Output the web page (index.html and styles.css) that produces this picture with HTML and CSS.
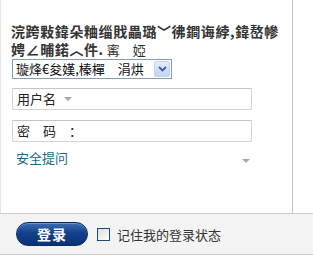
FILE: index.html
```html
<html>
	<head>
		<title>login</title>
		<link rel="stylesheet" href="styles.css">
	</head>
	<body>
		<div class="panel">
			<div class="title">
				<div class="line">浣跨敤鍏朵粬缁戝畾璐﹀彿鐧诲綍,鍏嶅幓</div>
				<div class="line">娉∠晡鍩︿件.<span class="thin"> 寗　婭</span></div>
			</div>
			<div class="select">
				<span class="select_text">璇烽€夋嫨,榛樿　涓烘</span>
				<span class="select_btn">
					<svg width="9" height="6" viewBox="0 0 9 6"><path d="M1 1 L4.5 4.5 L8 1" fill="none" stroke="#3a5ea8" stroke-width="1.8"/></svg>
				</span>
			</div>
			<div class="field field_user">用户名<span class="tri"></span></div>
			<div class="field">密　码　：</div>
			<div class="question">
				<a class="link">安全提问</a>
				<span class="tri"></span>
			</div>
		</div>
		<div class="footer">
			<div class="btn">登录</div>
			<label class="remember"><span class="check"></span>记住我的登录状态</label>
		</div>
	</body>
</html>
```
FILE: styles.css
```css
body {
  margin: 0;
  background-color: #fff;
  font-family: "Noto Sans CJK SC", "Liberation Sans", sans-serif;
  color: #222;
}

div.panel {
  width: 280px;
  height: 191px;
  padding: 22px 0 0 11px;
  border-right: 1px solid #c4c4c4;
  border-left: 1px solid #e4e4e4;
  display: flex;
  flex-direction: column;
}

div.title {
  font-size: 14px;
  font-weight: bold;
  line-height: 18px;
  color: #333;
  margin-left: -1px;
}

div.line {
  white-space: nowrap;
  letter-spacing: 0.6px;
}

span.thin {
  font-weight: normal;
  font-size: 13px;
  letter-spacing: 0;
}

div.select {
  width: 158px;
  height: 18px;
  border: 1px solid #7f9db9;
  display: flex;
  align-items: center;
  font-size: 13px;
  line-height: 18px;
}

span.select_text {
  flex: 1;
  padding-left: 3px;
  white-space: nowrap;
  color: #111;
}

span.select_btn {
  width: 16px;
  height: 16px;
  margin-right: 1px;
  border: 1px solid #c3d3f3;
  border-radius: 2px;
  background: linear-gradient(#e6edfc, #c1d3f7);
  display: flex;
  align-items: center;
  justify-content: center;
  box-sizing: border-box;
}

div.field {
  width: 234px;
  height: 20px;
  margin-top: 10px;
  border: 1px solid #d2d2d2;
  border-top-color: #c4c4c4;
  padding-left: 4px;
  font-size: 13px;
  line-height: 20px;
  color: #222;
  display: flex;
  align-items: center;
  box-sizing: content-box;
}

div.field_user {
  margin-top: 9px;
}

span.tri {
  width: 0;
  height: 0;
  margin-left: 8px;
  border-left: 4px solid transparent;
  border-right: 4px solid transparent;
  border-top: 4px solid #a8a8a8;
}

div.question {
  width: 234px;
  margin-top: 7px;
  padding-left: 4px;
  display: flex;
  align-items: center;
  justify-content: space-between;
}

a.link {
  font-size: 13px;
  line-height: 18px;
  color: #1b6886;
}

div.question span.tri {
  margin-top: 6px;
}

div.footer {
  height: 40px;
  border-top: 1px solid #cccccc;
  border-bottom: 1px solid #cccccc;
  background-color: #f3f3f3;
  padding-left: 16px;
  display: flex;
  align-items: center;
}

div.btn {
  width: 70px;
  height: 22px;
  border-radius: 12px;
  border: 1px solid #0c2a5c;
  background: linear-gradient(#3d6db3, #12418c 45%, #0b3276);
  box-shadow: inset 0 1px 0 #6a93cf;
  color: #fff;
  font-size: 14px;
  font-weight: bold;
  line-height: 22px;
  text-align: center;
  letter-spacing: 1px;
}

label.remember {
  margin-left: 9px;
  display: flex;
  align-items: center;
  font-size: 13px;
  color: #333;
}

span.check {
  width: 11px;
  height: 11px;
  margin-right: 7px;
  border: 1px solid #1c4a72;
  background: linear-gradient(135deg, #dcdcd6, #ffffff);
}
```
